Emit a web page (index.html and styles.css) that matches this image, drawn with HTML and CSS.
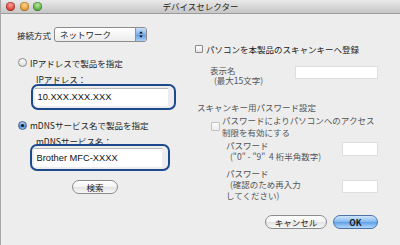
FILE: index.html
```html
<!DOCTYPE html>
<html lang="ja">
<head>
<meta charset="utf-8">
<title>デバイスセレクター</title>
<link rel="stylesheet" href="styles.css">
</head>
<body>
<div class="window">
  <div class="titlebar">
    <div class="lights">
      <span class="light red"></span>
      <span class="light yellow"></span>
      <span class="light green"></span>
    </div>
    <div class="title">デバイスセレクター</div>
    <div></div>
  </div>
  <div class="content">
    <div class="col-left">
      <div class="conn-row">
        <span class="conn-label">接続方式</span>
        <div class="popup">
          <span class="popup-text">ネットワーク</span>
          <span class="popup-arrows">
            <svg width="11" height="13" viewBox="0 0 11 13"><polygon points="3.5,5.5 5.5,3 7.5,5.5" fill="#111"/><polygon points="3.5,7.5 5.5,10 7.5,7.5" fill="#111"/></svg>
          </span>
        </div>
      </div>
      <div class="radio-row first">
        <span class="radio"></span><span>IPアドレスで製品を指定</span>
      </div>
      <div class="field-label ip-label">IPアドレス：</div>
      <div class="hl-box ip-box">
        <div class="text-field">10.XXX.XXX.XXX</div>
      </div>
      <div class="radio-row second">
        <span class="radio on"></span><span>mDNSサービス名で製品を指定</span>
      </div>
      <div class="field-label mdns-label">mDNSサービス名：</div>
      <div class="hl-box mdns-box">
        <div class="text-field">Brother MFC-XXXX</div>
      </div>
      <button class="btn search">検索</button>
    </div>
    <div class="col-right">
      <div class="check-row">
        <span class="checkbox"></span><span>パソコンを本製品のスキャンキーへ登録</span>
      </div>
      <div class="name-row">
        <div class="dim name-label">表示名<br><span class="sub">(最大15文字)</span></div>
        <div class="input name-input"></div>
      </div>
      <div class="dim section-title">スキャンキー用パスワード設定</div>
      <div class="pw-check-row">
        <span class="checkbox disabled"></span>
        <span class="dim">パスワードによりパソコンへのアクセス<br>制限を有効にする</span>
      </div>
      <div class="pw-row">
        <div class="dim pw-label">パスワード<br><span class="sub">("0" - "9"&nbsp; 4 桁半角数字)</span></div>
        <div class="input pw-input"></div>
      </div>
      <div class="pw-row second">
        <div class="dim pw-label">パスワード<br><span class="sub">(確認のため再入力<br>してください)</span></div>
        <div class="input pw-input"></div>
      </div>
    </div>
  </div>
  <div class="footer">
    <button class="btn cancel">キャンセル</button>
    <button class="btn ok">OK</button>
  </div>
</div>
</body>
</html>
```
FILE: styles.css
```css
* { box-sizing: border-box; margin: 0; padding: 0; }
html, body { width: 400px; height: 245px; overflow: hidden; }
body {
  font-family: "Noto Sans CJK JP", sans-serif;
  font-size: 8.5px;
  color: #1c1c1c;
  background: #ececec;
}
.window {
  width: 400px;
  height: 245px;
  display: flex;
  flex-direction: column;
  background: #ededed;
  border-left: 1px solid #a8a8a8;
}
.titlebar {
  height: 14px;
  display: grid;
  grid-template-columns: 1fr auto 1fr;
  align-items: center;
  background: linear-gradient(#e9e9e9, #c6c6c6);
  border-bottom: 1px solid #9c9c9c;
}
.lights { display: flex; gap: 4.5px; padding-left: 5px; }
.light {
  width: 9px; height: 9px; border-radius: 50%;
  box-shadow: inset 0 0 0 0.6px rgba(0,0,0,0.35);
}
.light.red { background: radial-gradient(circle at 50% 35%, #f7a49a 0%, #e1483e 55%, #a8231c 100%); }
.light.yellow { background: radial-gradient(circle at 50% 35%, #fbd58e 0%, #eaa33a 55%, #b46b12 100%); }
.light.green { background: radial-gradient(circle at 50% 35%, #b8e7a0 0%, #62b54a 55%, #2f7a22 100%); }
.title { line-height: 13px; color: #222; }

.content {
  display: grid;
  grid-template-columns: 178px 183px;
  padding: 13px 0 0 16px;
}
.col-left, .col-right { display: flex; flex-direction: column; align-items: flex-start; }

.conn-row { display: flex; align-items: center; gap: 3px; height: 15px; }
.popup {
  width: 93px; height: 15px;
  display: flex;
  border: 1px solid #8c8c8c;
  border-radius: 3px;
  background: linear-gradient(#ffffff, #ececec);
  overflow: hidden;
}
.popup-text { flex: 1; padding-left: 5px; line-height: 13px; }
.popup-arrows {
  width: 11px;
  border-left: 1px solid #7a97bf;
  background: linear-gradient(#c8e0fa, #7fb2ec 50%, #5e9be2 51%, #a9d0f7);
  display: flex; align-items: center; justify-content: center;
}

.radio-row { display: flex; align-items: center; gap: 3px; height: 11px; margin-left: 1px; }
.radio-row.first { margin-top: 15px; }
.radio-row.second { margin-top: 9.5px; }
.radio {
  width: 9px; height: 9px; border-radius: 50%;
  border: 1px solid #8a8a8a;
  background: linear-gradient(#ffffff, #dedede);
  position: relative;
}
.radio.on {
  border-color: #3f5f8a;
  background: linear-gradient(#c4def8, #5b97de 50%, #3d7fd3 51%, #9cc8f4);
}
.radio.on::after {
  content: ""; position: absolute; left: 2px; top: 2px;
  width: 3px; height: 3px; border-radius: 50%; background: #111;
}

.field-label { margin-left: 19px; line-height: 10px; height: 10px; }
.ip-label { margin-top: 6px; }
.mdns-label { margin-top: 5px; }

.hl-box {
  position: relative;
  border: 2.5px solid #1c4b8d;
  border-radius: 7px;
  background: #ededed;
  font-family: "Liberation Sans", "DejaVu Sans", sans-serif;
  font-size: 9.3px;
}
.ip-box { margin-left: 14px; width: 145px; height: 26px; padding: 1.5px 0 0 1.5px; }
.mdns-box { margin-left: 13px; margin-top: -1.5px; width: 140px; height: 27px; padding: 2px 0 0 1.5px; }
.text-field {
  width: 133px; height: 18px;
  background: #fff;
  border-top: 1px solid #b8b8b8;
  padding-left: 3px;
  line-height: 17px;
  color: #111;
}
.mdns-box .text-field { width: 128px; height: 19px; line-height: 18px; }

.btn {
  font-family: "Noto Sans CJK JP", sans-serif;
  font-size: 8.5px;
  color: #1c1c1c;
  height: 14px;
  line-height: 12px;
  border: 1px solid #8b8b8b;
  border-radius: 7px;
  background: linear-gradient(#ffffff, #f3f3f3 50%, #e2e2e2 51%, #f8f8f8);
  text-align: center;
}
.search { margin-left: 55px; margin-top: 8.5px; width: 46px; }

.check-row { display: flex; align-items: center; gap: 3px; height: 9px; margin-top: 17px; }
.checkbox {
  width: 8px; height: 8px;
  border: 1px solid #8a8a8a;
  border-radius: 1px;
  background: linear-gradient(#ffffff, #e2e2e2);
}
.checkbox.disabled { width: 9px; height: 9px; border-color: #c2c2c2; background: linear-gradient(#fafafa, #ededed); margin-top: 8px; }
.dim { color: #555; }
.sub { padding-left: 4px; }

.name-row { display: flex; justify-content: space-between; width: 183px; margin-top: 11.5px; }
.name-label { margin-left: 15px; line-height: 10.5px; }
.input { background: #fff; border: 1px solid #dedede; }
.name-input { width: 83px; height: 13px; margin-top: 1.5px; }

.section-title { margin-top: 16.5px; margin-left: 2px; line-height: 10px; }

.pw-check-row { display: flex; align-items: flex-start; gap: 2px; margin-left: 16px; margin-top: 2px; line-height: 12px; }

.pw-row { display: flex; justify-content: space-between; width: 183px; margin-top: 1.5px; }
.pw-row.second { margin-top: 6px; }
.pw-label { margin-left: 31px; line-height: 11px; }
.pw-input { width: 36px; height: 14px; margin-top: 2.5px; }
.pw-row.second .pw-input { margin-top: 12.5px; height: 13px; }

.footer {
  margin-top: auto;
  padding: 0 22px 16px 0;
  display: flex;
  justify-content: flex-end;
  gap: 6px;
}
.cancel { width: 62px; }
.ok {
  width: 45px;
  border-color: #4d72a4;
  background: linear-gradient(#cfe5fb, #82b8ef 50%, #5f9fe6 51%, #b2d8fc);
  font-weight: bold;
}
```
